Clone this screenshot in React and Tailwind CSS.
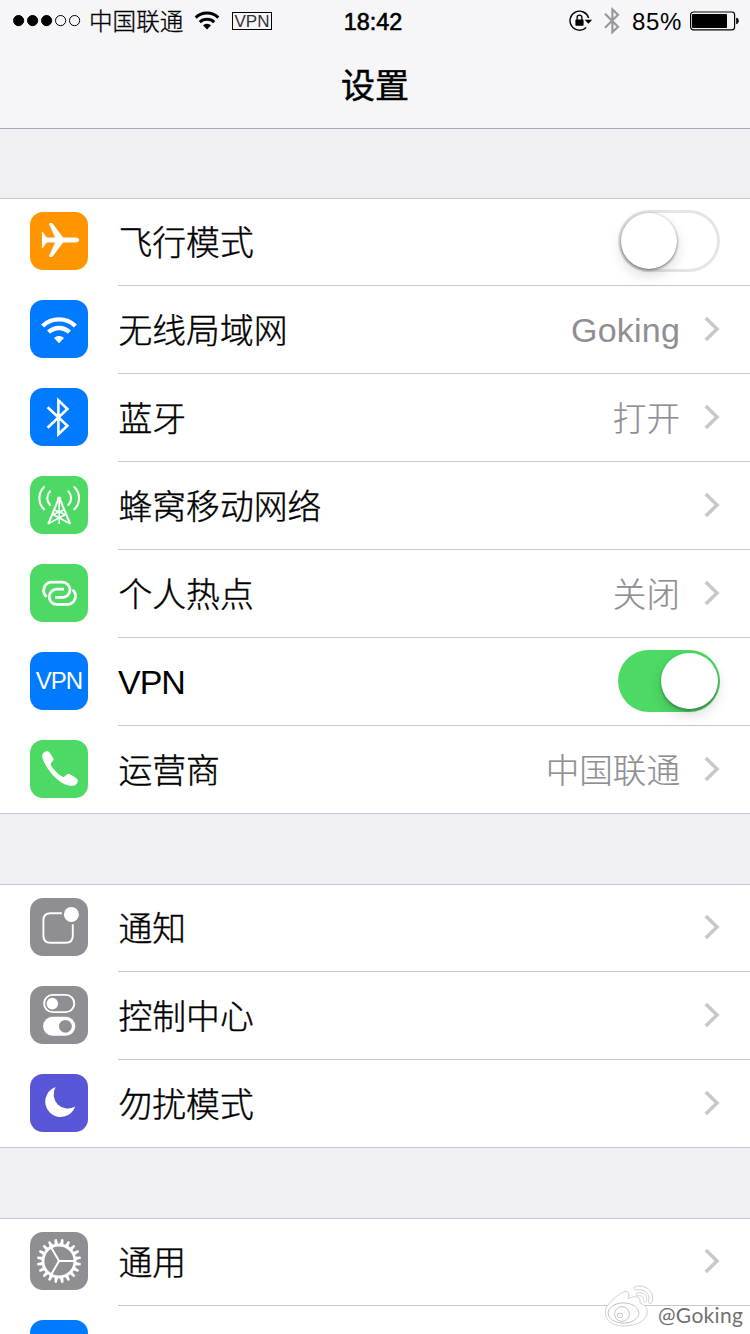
import { useState } from "react";

const FONT = "font-['Liberation_Sans','Noto_Sans_CJK_SC',sans-serif]";

/* ---------- row icons (58x58 tiles) ---------- */

const Tile = ({ className, children }) => (
    <div className={`w-[58px] h-[58px] rounded-[13px] shrink-0 overflow-hidden ${className}`}>
        <svg viewBox="0 0 58 58" className="w-full h-full" fill="none" stroke="none">
            {children}
        </svg>
    </div>
);

const AirplaneIcon = () => (
    <Tile className="bg-[#ff9500]">
        <path
            d="M12 20H12.8L16.6 25.6L25 25.6L19.3 12.4C19 11.5 19.3 11 20.1 11H21.4C22.2 11 22.6 11.4 23.2 12.2L33 25.5L45.8 25.6C47.9 25.7 49 26.7 49 28C49 29.3 47.9 30.3 45.8 30.4L33 30.5L23.2 43.8C22.6 44.6 22.2 45 21.4 45H20.1C19.3 45 19 44.5 19.3 43.6L25 30.4L16.6 30.4L12.8 36H12V28Z"
            fill="#fff"
        />
    </Tile>
);

const WifiIcon = () => (
    <Tile className="bg-[#007aff]">
        <g stroke="#fff" strokeWidth="4.4">
            <path d="M12.6 26A23.7 23.7 0 0 1 45.4 26" />
            <path d="M18.6 32.2A15 15 0 0 1 39.4 32.2" />
        </g>
        <path d="M29 43.3L24 38A7.6 7.6 0 0 1 34 38Z" fill="#fff" />
    </Tile>
);

const BluetoothIcon = () => (
    <Tile className="bg-[#007aff]">
        <path d="M17.6 19.2L37.4 37.8L28.4 46.2V12.4L37.4 21L17.6 39.8" stroke="#fff" strokeWidth="2.6" />
    </Tile>
);

const CellularIcon = () => (
    <Tile className="bg-[#4cd964]">
        <g stroke="#fff" strokeWidth="2.1" strokeLinecap="round">
            <path d="M20 15.4C16.3 19.4 16.3 25 20 29" />
            <path d="M38.4 15.4C42.1 19.4 42.1 25 38.4 29" />
            <path d="M14 11C7.8 17.5 7.8 26.8 14 33.3" />
            <path d="M44.4 11C50.6 17.5 50.6 26.8 44.4 33.3" />
        </g>
        <circle cx="29.2" cy="22.6" r="2.2" fill="#fff" />
        <g stroke="#fff" strokeWidth="2">
            <path d="M28.6 23L18.2 48" />
            <path d="M29.8 23L40.2 48" />
        </g>
        <path d="M29.2 23V48" stroke="#fff" strokeWidth="1.6" />
        <path d="M24.6 34L35.4 38.5L18.4 47.6M33.8 34L23 38.5L40 47.6" stroke="#fff" strokeWidth="1.6" />
    </Tile>
);

const HotspotIcon = () => (
    <Tile className="bg-[#4cd964]">
        <g stroke="#fff" strokeWidth="2.8">
            <path d="M16.6 32.8A8.4 8.4 0 0 1 20.8 18.2H32.4A7.6 7.6 0 0 1 32.4 33.4H25.2" />
            <path
                d="M16.6 32.8A8.4 8.4 0 0 1 20.8 18.2H32.4A7.6 7.6 0 0 1 32.4 33.4H25.2"
                transform="rotate(180 29.6 29.3)"
            />
        </g>
    </Tile>
);

const VpnIcon = () => (
    <div className="w-[58px] h-[58px] rounded-[13px] shrink-0 bg-[#007aff] flex items-center justify-center text-white text-[24px] leading-none tracking-[-1px]">
        VPN
    </div>
);

const PhoneIcon = () => (
    <Tile className="bg-[#4cd964]">
        <path
            d="M12.2 15.4C12.4 13.2 15.4 11 17.6 11C18.8 11 23 17.4 23.6 19C24 20.8 20.6 22.6 20.8 24.4C21.4 27.6 29.6 35.8 33.2 37C34.8 37.4 36.2 34.2 38.2 33.8C39.8 33.6 46.6 38.2 47.6 39.6C48.6 41.2 46.6 44.6 44.6 45.4C42 46.4 36 45.4 31.4 42.4C26.6 39.2 21.4 34.2 18 29C14.6 24 12 18.4 12.2 15.4Z"
            fill="#fff"
        />
    </Tile>
);

const NotificationIcon = () => (
    <Tile className="bg-[#8e8e93]">
        <path
            d="M31.8 15.3H20.4C16 15.3 13.4 17.9 13.4 22.3V37.7C13.4 42.1 16 44.7 20.4 44.7H35.8C40.2 44.7 42.8 42.1 42.8 37.7V26.2"
            stroke="#fff"
            strokeWidth="1.9"
        />
        <circle cx="41.4" cy="16.4" r="7.5" fill="#fff" />
    </Tile>
);

const ControlCenterIcon = () => (
    <Tile className="bg-[#8e8e93]">
        <rect x="14.1" y="8.9" width="30.2" height="17.2" rx="8.6" stroke="#fff" strokeWidth="1.9" />
        <circle cx="22.3" cy="17.6" r="5.8" fill="#fff" />
        <rect x="13.1" y="30.8" width="32.2" height="19" rx="9.5" fill="#fff" />
        <circle cx="35.4" cy="40.3" r="6.4" fill="#8e8e93" />
    </Tile>
);

const MoonIcon = () => (
    <Tile className="bg-[#5856d6]">
        <path d="M25.6 13A15.4 15.4 0 1 0 45.2 32.4A14.2 14.2 0 0 1 25.6 13Z" fill="#fff" />
    </Tile>
);

const TEETH = Array.from({ length: 20 }, (_, i) => i * 18);

const GearIcon = () => (
    <Tile className="bg-[#8e8e93]">
        <circle cx="29" cy="29" r="16" stroke="#fff" strokeWidth="2.8" />
        {TEETH.map((deg) => (
            <path
                key={deg}
                d="M27.2 12.6L27.9 7H30.1L30.8 12.6Z"
                fill="#fff"
                transform={`rotate(${deg + 9} 29 29)`}
            />
        ))}
        <path d="M29 29H44M29 29L21.5 16M29 29L21.5 42" stroke="#fff" strokeWidth="2" />
    </Tile>
);

const DisplayIcon = () => <Tile className="bg-[#007aff]" />;

/* ---------- controls ---------- */

const Chevron = () => (
    <svg viewBox="0 0 16 26" className="w-4 h-[26px] shrink-0" fill="none">
        <path d="M1.8 2L13 13L1.8 24" stroke="#c7c7cc" strokeWidth="3.5" />
    </svg>
);

const Toggle = ({ on, onChange }) => (
    <button
        role="switch"
        aria-checked={on}
        onClick={onChange}
        className={`w-[102px] h-[62px] rounded-full flex items-center shrink-0 ${on ? "justify-end pr-[2.5px] bg-[#4cd964]" : "pl-[2.5px] bg-white shadow-[inset_0_0_0_3px_#e5e5e5]"
            }`}
    >
        <span
            className={`w-[56.5px] h-[56.5px] rounded-full bg-white ${on ? "shadow-[0_2px_3px_rgba(0,0,0,0.3),0_6px_14px_rgba(0,0,0,0.14)]" : "shadow-[0_1px_3px_rgba(0,0,0,0.55),0_6px_14px_rgba(0,0,0,0.15)]"
                }`}
        />
    </button>
);

// Latin glyphs sit a little higher and tighter than the CJK ones
const isLatin = (text) => /^[A-Za-z]+$/.test(text);

const Row = ({ icon: Icon, label, value, toggle, last }) => {
    const [on, setOn] = useState(toggle === "on");

    return (
        <div className={`h-[88px] flex pl-[30px] first:-mt-px ${last ? "border-b border-[#c8c7cc]" : ""}`}>
            <div className={`flex items-center pr-[30px] ${last ? "pb-px" : "pb-0.5"}`}>
                <Icon />
            </div>
            <div
                className={`flex-1 flex items-center pr-[30px] pb-px ${last ? "" : "border-b border-[#c8c7cc]"}`}
            >
                <span
                    className={`flex-1 leading-[44px] text-black ${isLatin(label)
                        ? "text-[34px] pt-px tracking-[-1px]"
                        : "text-[33.8px] pt-[4px] pl-[0.5px] font-light [-webkit-text-stroke:0.4px_#000]"
                        }`}
                >
                    {label}
                </span>
                {value && (
                    <span
                        className={`leading-[44px] pr-6 text-[#8e8e93] ${isLatin(value)
                            ? "text-[34px] pt-px tracking-[0.2px]"
                            : "text-[33.6px] pt-[6px] font-light [-webkit-text-stroke:0.2px_#8e8e93]"
                            }`}
                    >
                        {value}
                    </span>
                )}
                {toggle ? <Toggle on={on} onChange={() => setOn(!on)} /> : <Chevron />}
            </div>
        </div>
    );
};

const GROUPS = [
    [
        { icon: AirplaneIcon, label: "飞行模式", toggle: "off" },
        { icon: WifiIcon, label: "无线局域网", value: "Goking" },
        { icon: BluetoothIcon, label: "蓝牙", value: "打开" },
        { icon: CellularIcon, label: "蜂窝移动网络" },
        { icon: HotspotIcon, label: "个人热点", value: "关闭" },
        { icon: VpnIcon, label: "VPN", toggle: "on" },
        { icon: PhoneIcon, label: "运营商", value: "中国联通" },
    ],
    [
        { icon: NotificationIcon, label: "通知" },
        { icon: ControlCenterIcon, label: "控制中心" },
        { icon: MoonIcon, label: "勿扰模式" },
    ],
    [
        { icon: GearIcon, label: "通用" },
        { icon: DisplayIcon, label: "" },
    ],
];

/* ---------- status bar ---------- */

const StatusBar = () => (
    <div className="h-10 grid grid-cols-[1fr_auto_1fr] items-center text-black">
        <div className="flex items-center pl-[13px]">
            <svg viewBox="0 0 70 12" className="w-[70px] h-3">
                {[0, 1, 2, 3, 4].map((i) => (
                    <circle
                        key={i}
                        cx={5.6 + i * 14}
                        cy="5.6"
                        r="5.1"
                        fill={i < 3 ? "#000" : "none"}
                        stroke="#000"
                        strokeWidth="1"
                    />
                ))}
            </svg>
            <span className="ml-[6px] w-[96px] text-[23.6px] leading-[40px] pt-0.5 font-light [-webkit-text-stroke:0.3px_#000]">
                中国联通
            </span>
            <svg viewBox="0 0 26 20" className="ml-[9px] w-[26px] h-5" fill="none">
                <path d="M1.7 6.6A16.4 16.4 0 0 1 24.3 6.6" stroke="#000" strokeWidth="3" />
                <path d="M5.8 11.2A10.4 10.4 0 0 1 20.2 11.2" stroke="#000" strokeWidth="3" />
                <path d="M13 18.6L9 14.3A5.8 5.8 0 0 1 17 14.3Z" fill="#000" />
            </svg>
            <span className="ml-[12px] w-10 h-[18px] border border-black flex items-center justify-center text-[17px] leading-none text-[#333]">
                VPN
            </span>
        </div>
        <span className="text-[23.4px] leading-[40px] pt-px pr-[4px] [-webkit-text-stroke:0.6px_#000]">18:42</span>
        <div className="flex items-center justify-end pr-[10px]">
            <svg viewBox="0 0 24 24" className="w-6 h-6" fill="none">
                <path d="M19.6 9A9.5 9.5 0 1 0 17.2 18.4" stroke="#000" strokeWidth="1.4" />
                <path d="M15.6 10.8H23.2L19.4 14.8Z" fill="#000" />
                <rect x="6.4" y="10.6" width="8.2" height="6.2" rx="0.8" fill="#000" />
                <path d="M8.1 11V8.6A2.4 2.4 0 0 1 12.9 8.6V11" stroke="#000" strokeWidth="1.3" />
            </svg>
            <svg viewBox="0 0 16 28" className="ml-[11px] w-4 h-7" fill="none">
                <path d="M1 6.8L14 19.8L8.4 25.2V2.4L14 7.8L1 20.8" stroke="#99999c" strokeWidth="2.2" />
            </svg>
            <span className="ml-[12px] w-[51px] text-[24px] leading-[40px] pt-px tracking-[0.6px]">85%</span>
            <svg viewBox="0 0 50 20" className="ml-[7px] w-[50px] h-5" fill="none">
                <rect x="0.6" y="1" width="44" height="17.8" rx="2.8" stroke="#000" strokeWidth="1.2" />
                <rect x="2" y="3" width="35" height="14" rx="0.8" fill="#000" />
                <path d="M46.2 6.8C49.6 7.2 49.6 12.8 46.2 13.2Z" fill="#000" />
            </svg>
        </div>
    </div>
);

const Watermark = () => (
    <div className="absolute left-[602px] top-[1284px] flex items-end">
        <svg viewBox="0 0 54 46" className="w-[54px] h-[46px]" fill="#fff" stroke="#c4c4c4" strokeWidth="1">
            <path
                d="M4 24C8 17 16 10 23 7.5C28 7 27 12 26 14.5C34 11 39 13 38 19C44 21 46 25 45 30C43 38 32 42.5 20 42C8 41 1 34 4 24Z"
                stroke="#d0d0d0"
            />
            <ellipse cx="21.5" cy="29" rx="15.5" ry="10.2" />
            <circle cx="20" cy="30" r="7.4" />
            <ellipse cx="18" cy="31.4" rx="2.7" ry="2.3" />
            <path d="M33 2.5C44 0 53 8 50 18C49 20.5 46 20 46.5 17.5C48.5 10 43 4.5 34 6C32 6 31.5 3 33 2.5Z" stroke="#d0d0d0" />
            <path d="M35 9C41 7.5 46 11.5 44.5 17C44 19 41 18.5 41.5 16.5C42 13.5 40 11 36 12C34 12 33.5 10 35 9Z" stroke="#d0d0d0" />
        </svg>
        <span className="ml-0.5 pb-[3px] font-['Lato',sans-serif] text-[21px] leading-6 tracking-[0.3px] text-[#707070] [text-shadow:-1px_-1px_0_#fff]">
            @Goking
        </span>
    </div>
);

const App = () => {
    return (
        <div className={`relative w-[750px] h-[1334px] overflow-hidden bg-[#efeff4] ${FONT}`}>
            <header className="h-[129px] bg-[#f6f6f8] border-b border-[#a9a9b0]">
                <StatusBar />
                <h1 className="text-center text-[34px] leading-[88px] pt-0.5 text-black [-webkit-text-stroke:0.5px_#000]">
                    设置
                </h1>
            </header>

            <main className="pt-[69px] flex flex-col gap-[70px]">
                {GROUPS.map((rows, i) => (
                    <section key={i} className="bg-white border-t border-[#c8c7cc]">
                        {rows.map((row, j) => (
                            <Row key={j} {...row} last={j === rows.length - 1} />
                        ))}
                    </section>
                ))}
            </main>

            <Watermark />
        </div>
    );
};

export default App;
